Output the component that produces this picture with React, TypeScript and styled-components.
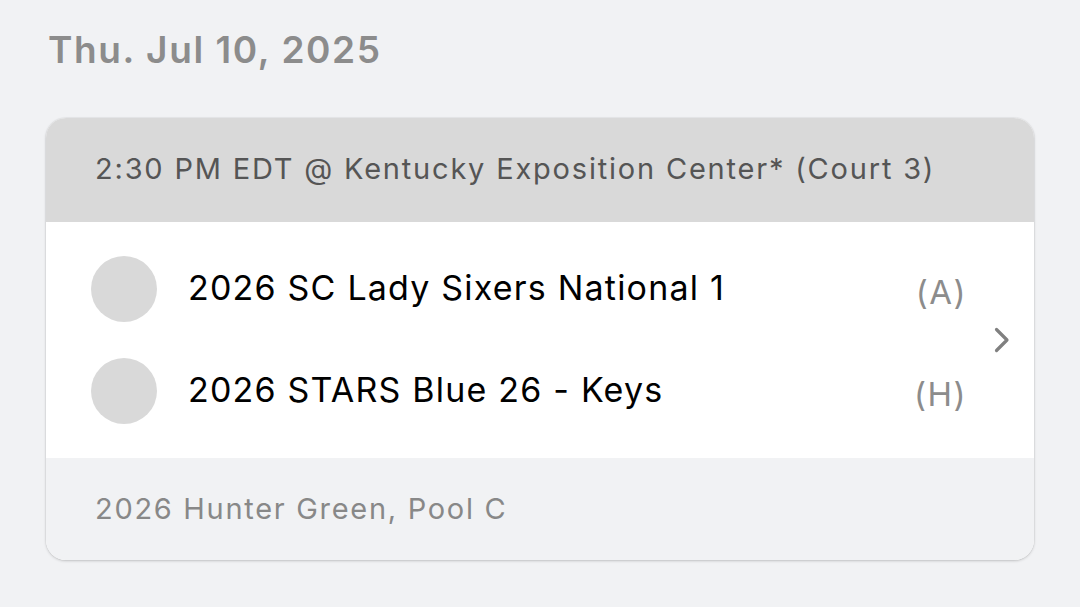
import React from "react";
import styled, { createGlobalStyle } from "styled-components";

const Global = createGlobalStyle`
  html, body { margin: 0; padding: 0; background: #f1f2f4; }
  body { font-family: "Inter", "Noto Sans", sans-serif; }
`;

const Page = styled.div`
  width: 1080px;
  height: 607px;
  box-sizing: border-box;
  padding: 24px 46px 0 46px;
  background: #f1f2f4;
`;

const DateTitle = styled.h1`
  margin: 0 0 0 2px;
  font-size: 37px;
  font-weight: 600;
  color: #8c8c8c;
  line-height: 52px;
  letter-spacing: 1.6px;
`;

const Card = styled.div`
  margin-top: 42px;
  width: 988px;
  border-radius: 20px;
  overflow: hidden;
  background: #fff;
  box-shadow: 0 1px 3px rgba(0, 0, 0, 0.18), 0 0 0 1px rgba(0, 0, 0, 0.03);
`;

const Header = styled.div`
  height: 104px;
  background: #d9d9d9;
  display: flex;
  align-items: center;
  padding-left: 49px;
  padding-bottom: 4px;
  box-sizing: border-box;
  font-size: 29px;
  color: #555555;
  letter-spacing: 1.8px;
`;

const Body = styled.div`
  display: flex;
  align-items: center;
  padding: 16px 23px 16px 0;
`;

const Teams = styled.div`
  flex: 1;
  display: flex;
  flex-direction: column;
`;

const TeamRow = styled.div`
  height: 102px;
  display: flex;
  align-items: center;
  padding-left: 45px;
`;

const Logo = styled.div`
  width: 66px;
  height: 66px;
  border-radius: 50%;
  background: #d9d9d9;
  flex-shrink: 0;
`;

const TeamName = styled.div`
  flex: 1;
  margin-left: 31px;
  margin-top: -4px;
  font-size: 34px;
  color: #000;
  letter-spacing: 1.2px;
`;

const Side = styled.div`
  font-size: 33px;
  color: #8c8c8c;
  letter-spacing: 1.5px;
  margin-top: 6px;
`;

const Chevron = styled.div`
  margin-left: 26px;
  display: flex;
`;

const Footer = styled.div`
  height: 102px;
  background: #f1f2f4;
  display: flex;
  align-items: center;
  padding-left: 49px;
  padding-bottom: 2px;
  box-sizing: border-box;
  font-size: 29px;
  color: #888888;
  letter-spacing: 1.7px;
`;

export default function App() {
  return (
    <>
      <Global />
      <Page>
        <DateTitle>Thu. Jul 10, 2025</DateTitle>
        <Card>
          <Header>2:30 PM EDT @ Kentucky Exposition Center* (Court 3)</Header>
          <Body>
            <Teams>
              <TeamRow>
                <Logo />
                <TeamName>2026 SC Lady Sixers National 1</TeamName>
                <Side>(A)</Side>
              </TeamRow>
              <TeamRow>
                <Logo />
                <TeamName>2026 STARS Blue 26 - Keys</TeamName>
                <Side>(H)</Side>
              </TeamRow>
            </Teams>
            <Chevron>
              <svg width="18" height="28" viewBox="0 0 18 28">
                <path
                  d="M3.5 3.5 L14 14 L3.5 24.5"
                  fill="none"
                  stroke="#808080"
                  strokeWidth="3.2"
                  strokeLinecap="round"
                  strokeLinejoin="round"
                />
              </svg>
            </Chevron>
          </Body>
          <Footer>2026 Hunter Green, Pool C</Footer>
        </Card>
      </Page>
    </>
  );
}
